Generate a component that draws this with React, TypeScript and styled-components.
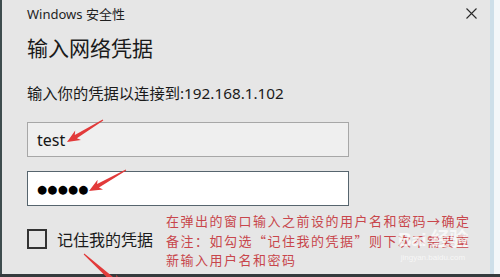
import React from "react";
import styled, { createGlobalStyle } from "styled-components";

const Global = createGlobalStyle`
  html, body { margin: 0; padding: 0; background: #e6e6e6; }
  #root { width: 500px; height: 277px; }
`;

const UI_FONT = `"Noto Sans", "Open Sans", "Noto Sans CJK SC", sans-serif`;
const CJK_FONT = `"Noto Sans CJK SC", "Noto Sans", sans-serif`;

const Frame = styled.div`
  position: relative;
  width: 500px;
  height: 277px;
  display: flex;
  flex-direction: column;
  overflow: hidden;
  background: #e6e6e6;
`;

const Body = styled.div`
  flex: 1;
  display: flex;
  min-height: 0;
`;

const LeftEdge = styled.div`
  width: 2px;
  background: #3e4c4e;
`;

const RightEdge = styled.div`
  width: 10px;
  display: flex;
`;

const EdgeBlue = styled.div`
  width: 4px;
  background: #cddfe9;
`;

const EdgeLight = styled.div`
  flex: 1;
  background: #f3f7f9;
`;

const BottomEdge = styled.div`
  height: 3px;
  background: #353b3d;
`;

const Panel = styled.div`
  flex: 1;
  display: flex;
  flex-direction: column;
  padding-left: 25px;
`;

const TitleBar = styled.div`
  height: 26px;
  display: flex;
  align-items: center;
  justify-content: space-between;
  padding-right: 13px;
`;

const TitleText = styled.span`
  font-family: ${UI_FONT};
  font-size: 13px;
  color: #1f1f1f;
`;

const Heading = styled.div`
  margin-top: 7px;
  font-family: ${CJK_FONT};
  font-size: 21px;
  line-height: 28px;
  color: #1a1a1a;
`;

const Subtitle = styled.div`
  margin-top: 21px;
  font-family: ${UI_FONT};
  font-size: 15.3px;
  line-height: 22px;
  color: #1a1a1a;
`;

const Field = styled.div<{ $focused?: boolean }>`
  box-sizing: border-box;
  width: 322px;
  height: 35px;
  margin-top: ${(p) => (p.$focused ? "14px" : "18px")};
  display: flex;
  align-items: center;
  padding-left: 9px;
  border: 1px solid ${(p) => (p.$focused ? "#56656e" : "#a7a7a7")};
  background: ${(p) => (p.$focused ? "#ffffff" : "#efefef")};
  font-family: ${UI_FONT};
  font-size: 16px;
  color: #151515;
`;

const Dots = styled.span`
  font-family: "DejaVu Sans", sans-serif;
  font-size: 11.5px;
  letter-spacing: 0.3px;
  color: #000;
`;

const CheckRow = styled.div`
  margin-top: 21px;
  display: flex;
  align-items: center;
  gap: 10px;
`;

const CheckBox = styled.div`
  box-sizing: border-box;
  width: 20px;
  height: 20px;
  border: 2px solid #333;
`;

const CheckLabel = styled.span`
  font-family: ${CJK_FONT};
  font-size: 16px;
  color: #1a1a1a;
`;

const Note = styled.div`
  position: absolute;
  left: 166px;
  top: 211px;
  font-family: ${CJK_FONT};
  font-size: 13px;
  line-height: 19.5px;
  letter-spacing: 1.5px;
  color: #c8464c;
  white-space: nowrap;
`;

const Overlay = styled.svg`
  position: absolute;
  left: 0;
  top: 0;
  pointer-events: none;
`;

const Watermark = styled.div`
  position: absolute;
  left: 398px;
  top: 224px;
  display: flex;
  flex-direction: column;
  align-items: center;
  color: rgba(255, 255, 255, 0.7);
  font-family: "Liberation Sans", "Noto Sans CJK SC", sans-serif;
  pointer-events: none;
`;

const WmMain = styled.span`
  font-size: 19px;
  font-weight: bold;
  letter-spacing: -0.5px;
`;

const WmSub = styled.span`
  font-size: 8px;
  margin-top: 2px;
`;

type P = [number, number];

function arrowPoints(tip: P, tail: P, headLen: number, headW: number, shaftW: number, tailW: number) {
  const dx = tail[0] - tip[0];
  const dy = tail[1] - tip[1];
  const len = Math.hypot(dx, dy);
  const ux = dx / len;
  const uy = dy / len;
  const nx = -uy;
  const ny = ux;
  const base: P = [tip[0] + ux * headLen, tip[1] + uy * headLen];
  const notch: P = [tip[0] + ux * headLen * 0.8, tip[1] + uy * headLen * 0.8];
  const pts: P[] = [
    tip,
    [base[0] + nx * headW / 2, base[1] + ny * headW / 2],
    [notch[0] + nx * shaftW / 2, notch[1] + ny * shaftW / 2],
    [tail[0] + nx * tailW / 2, tail[1] + ny * tailW / 2],
    [tail[0] - nx * tailW / 2, tail[1] - ny * tailW / 2],
    [notch[0] - nx * shaftW / 2, notch[1] - ny * shaftW / 2],
    [base[0] - nx * headW / 2, base[1] - ny * headW / 2],
  ];
  return pts.map((p) => `${p[0].toFixed(1)},${p[1].toFixed(1)}`).join(" ");
}

const Close = () => (
  <svg width="11" height="11" viewBox="0 0 11 11">
    <path d="M0.5 0.5 L10.5 10.5 M10.5 0.5 L0.5 10.5" stroke="#2a2a2a" strokeWidth="1.1" />
  </svg>
);

export default function App() {
  return (
    <>
      <Global />
      <Frame>
        <Body>
          <LeftEdge />
          <Panel>
            <TitleBar>
              <TitleText>Windows 安全性</TitleText>
              <Close />
            </TitleBar>
            <Heading>输入网络凭据</Heading>
            <Subtitle>输入你的凭据以连接到:192.168.1.102</Subtitle>
            <Field>test</Field>
            <Field $focused>
              <Dots>●●●●●</Dots>
            </Field>
            <CheckRow>
              <CheckBox />
              <CheckLabel>记住我的凭据</CheckLabel>
            </CheckRow>
          </Panel>
          <RightEdge>
            <EdgeBlue />
            <EdgeLight />
          </RightEdge>
        </Body>
        <BottomEdge />
        <Note>
          在弹出的窗口输入之前设的用户名和密码→确定
          <br />
          备注：如勾选“记住我的凭据”则下次不需要重
          <br />
          新输入用户名和密码
        </Note>
        <Watermark>
          <WmMain>Bai 经验</WmMain>
          <WmSub>jingyan.baidu.com</WmSub>
        </Watermark>
        <Overlay width="500" height="277" viewBox="0 0 500 277">
          <polygon fill="#e23a3a" points={arrowPoints([67, 142], [103, 120], 13, 11, 4, 1)} />
          <polygon fill="#e23a3a" points={arrowPoints([89, 191], [126, 170], 13, 11, 4, 1)} />
          <polygon fill="#e23a3a" points={arrowPoints([124, 290], [84, 254], 16, 13, 5, 1)} />
        </Overlay>
      </Frame>
    </>
  );
}
